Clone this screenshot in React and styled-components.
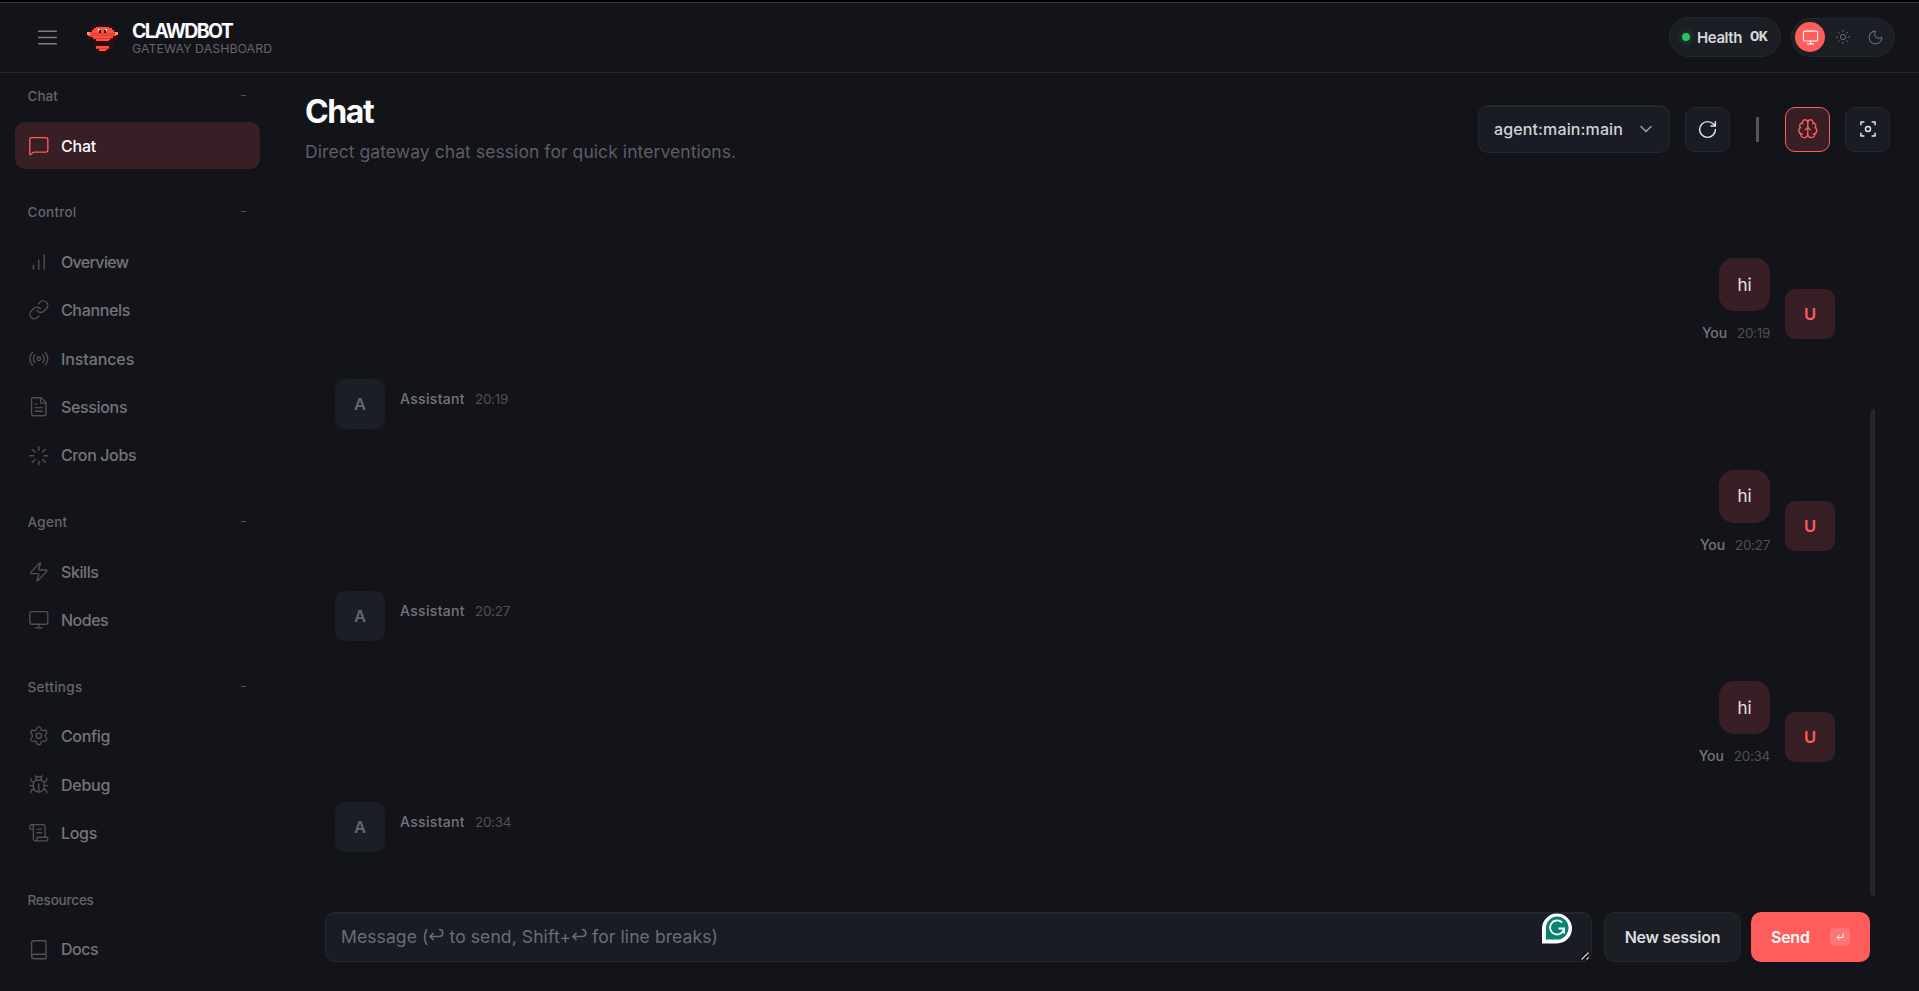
import React from "react";
import styled, { createGlobalStyle } from "styled-components";
import {
  MessageSquare, Link, Radio, FileText, Loader, Zap, Monitor, Settings, Bug,
  ScrollText, Book, Sun, Moon, RotateCw, Brain, ChevronDown,
} from "lucide-react";

const Global = createGlobalStyle`
  * { box-sizing: border-box; }
  body { margin: 0; background: #12141a; overflow: hidden; }
  button { font: inherit; cursor: pointer; }
`;

const Shell = styled.div`
  width: 100vw;
  height: 100vh;
  display: grid;
  grid-template: 73px minmax(0, 1fr) / 275px minmax(0, 1fr);
  background: #12141a;
  color: #e4e4e7;
  font-family: Inter, "Noto Sans", sans-serif;
`;

const Topbar = styled.header`
  grid-column: 1 / -1;
  display: flex;
  align-items: center;
  justify-content: space-between;
  padding: 0 24px 0 35px;
  border-top: 2px solid #000;
  border-bottom: 1px solid #27272a;
  box-shadow: inset 0 1px #3a3a3d;
`;

const Brand = styled.div`
  display: flex;
  align-items: center;
  svg { display: block; }
`;

const LogoSlot = styled.div`
  margin: 4px 0 0 22px;
`;

const BrandText = styled.div`
  display: flex;
  flex-direction: column;
  margin: 3px 0 0 8px;
  white-space: nowrap;
`;

const BrandName = styled.div`
  font-size: 19.5px;
  font-weight: 700;
  line-height: 20px;
  letter-spacing: -1.65px;
  color: #fafafa;
`;

const BrandSub = styled.div`
  font-size: 12.3px;
  line-height: 15px;
  letter-spacing: 0.08px;
  color: #65656d;
`;

const TopActions = styled.div`
  display: flex;
  align-items: center;
  gap: 10px;
`;

const Pill = styled.div`
  display: flex;
  align-items: center;
  width: 112px;
  height: 40px;
  padding-left: 12px;
  border: 1px solid #27272a;
  border-radius: 20px;
  background: #1b1e25;
  font-size: 15px;
  font-weight: 600;
  letter-spacing: -0.41px;
  white-space: nowrap;
  color: #d6d6d9;
`;

const Dot = styled.span`
  width: 8px;
  height: 8px;
  margin-right: 7px;
  border-radius: 50%;
  background: #22c55e;
  box-shadow: 0 0 8px rgba(34, 197, 94, 0.4);
`;

const PillValue = styled.span`
  margin-left: 8px;
  font: 700 15.5px "Liberation Mono", monospace;
  letter-spacing: -0.7px;
`;

const ThemeToggle = styled.div`
  display: flex;
  align-items: center;
  width: 104px;
  height: 39px;
  padding: 0 3px;
  gap: 2.5px;
  border: 1px solid #27272a;
  border-radius: 20px;
  background: #1b1e25;
`;

const ThemeOption = styled.span`
  display: grid;
  place-items: center;
  width: 30px;
  height: 30px;
  border-radius: 50%;
  color: ${(p) => (p.$on ? "#fff" : "#6a6a72")};
  background: ${(p) => (p.$on ? "#ff5c5c" : "transparent")};
`;

const Nav = styled.nav`
  padding: 8px 15px 0;
`;

const Section = styled.section`
  margin-bottom: 28.2px;
`;

const SectionLabel = styled.div`
  display: flex;
  justify-content: space-between;
  height: 30px;
  margin-bottom: 11px;
  padding: 0 13px 0 12.5px;
  line-height: 30px;
  font-size: 13.5px;
  font-weight: 500;
  letter-spacing: ${(p) => p.$track}px;
  color: #65656d;
`;

const Dash = styled.span`
  font-size: 10px;
  line-height: 27px;
  letter-spacing: 0;
  color: #55555c;
`;

const NavItem = styled.a`
  display: flex;
  align-items: center;
  gap: 11.2px;
  height: 47px;
  margin-bottom: 1.45px;
  padding-left: 13.2px;
  border-radius: 10px;
  font-size: 16px;
  font-weight: 500;
  letter-spacing: ${(p) => p.$track}px;
  color: ${(p) => (p.$active ? "#fafafa" : "#74747c")};
  background: ${(p) => (p.$active ? "#371f25" : "transparent")};
  svg { color: ${(p) => (p.$active ? "#ff5c5c" : "#505056")}; }
`;

const Main = styled.main`
  display: flex;
  flex-direction: column;
  padding: 19px 29px 28px 30px;
`;

const PageHeader = styled.div`
  display: flex;
  justify-content: space-between;
  height: 92px;
`;

const Title = styled.h1`
  margin: 0;
  font-size: 32px;
  line-height: 40px;
  font-weight: 700;
  letter-spacing: -1.4px;
  color: #fafafa;
`;

const Subtitle = styled.p`
  margin: 9px 0 0;
  font-size: 17.5px;
  line-height: 22px;
  letter-spacing: 0.07px;
  color: #5d5d65;
`;

const Controls = styled.div`
  display: flex;
  align-items: center;
  height: 48px;
  margin-top: 13px;
`;

const SelectBox = styled.div`
  display: flex;
  align-items: center;
  justify-content: space-between;
  width: 192px;
  height: 48px;
  margin-right: 15px;
  padding: 0 13px 2px 15px;
  border: 1px solid #27272a;
  border-top-width: 2px;
  border-radius: 10px;
  background: #191c24;
  font-size: 16px;
  font-weight: 500;
  letter-spacing: 0.13px;
  color: #d2d2d6;
`;

const IconButton = styled.button`
  display: grid;
  place-items: center;
  width: 45px;
  height: 45px;
  padding: 0;
  border: 1px solid ${(p) => (p.$on ? "#ff5c5c" : "#27272a")};
  border-radius: 10px;
  background: ${(p) => (p.$on ? "#371f25" : "#191c24")};
  color: ${(p) => (p.$on ? "#ff5c5c" : "#e4e4e7")};
  & + & { margin-left: 15px; }
`;

const Separator = styled.span`
  width: 3px;
  height: 25px;
  margin: 0 26px;
  background: #55555b;
`;

const Thread = styled.div`
  position: relative;
  flex: 1;
  min-height: 0;
  padding: 74px 55px 0 30px;
`;

const ScrollThumb = styled.span`
  position: absolute;
  top: 225px;
  right: 15px;
  width: 5px;
  height: 488px;
  border-radius: 5px 0 0 5px;
  background: #27272a;
`;

const Exchange = styled.div`
  height: 211.6px;
`;

const UserGroup = styled.div`
  display: flex;
  justify-content: flex-end;
  gap: 15px;
  height: 85px;
`;

const AssistantGroup = styled.div`
  display: flex;
  gap: 15px;
  margin-top: 36px;
`;

const Stack = styled.div`
  display: flex;
  flex-direction: column;
  align-items: flex-end;
`;

const Bubble = styled.div`
  display: grid;
  place-items: center;
  width: 51px;
  height: 53px;
  border-radius: 15px;
  background: #371f25;
  font-size: 17px;
  color: #e4e4e7;
`;

const Avatar = styled.div`
  display: grid;
  place-items: center;
  width: 50px;
  height: 50px;
  margin-top: ${(p) => (p.$user ? 31 : 0)}px;
  border-radius: 10px;
  background: ${(p) => (p.$user ? "#371f25" : "#1b1e25")};
  color: ${(p) => (p.$user ? "#ff5c5c" : "#65656d")};
  font-size: 16.5px;
  font-weight: 600;
`;

const Meta = styled.div`
  display: flex;
  gap: 10px;
  margin-top: ${(p) => (p.$assistant ? 10 : 12)}px;
  font-size: 14px;
  line-height: 20px;
  font-weight: 500;
  letter-spacing: ${(p) => (p.$assistant ? 0.33 : -0.1)}px;
  color: #74747c;
  white-space: nowrap;
`;

const Time = styled.span`
  font-weight: 400;
  font-size: 13.5px;
  letter-spacing: -0.3px;
  color: #505056;
`;

const Composer = styled.div`
  display: flex;
  height: 51px;
  padding: 0 20px;
`;

const Field = styled.div`
  position: relative;
  flex: 1;
  height: 50px;
  margin-right: 12px;
  padding: 0 15px;
  border: 1px solid #27272a;
  border-top-width: 2px;
  border-radius: 10px;
  background: #191c24;
  font-size: 17.5px;
  line-height: 46px;
  letter-spacing: 0.1px;
  color: #6d6d70;
`;

const Helper = styled.svg`
  position: absolute;
  right: 19px;
  top: -1px;
`;

const Grip = styled.svg`
  position: absolute;
  right: 1px;
  bottom: 0;
`;

const ActionButton = styled.button`
  display: flex;
  align-items: center;
  justify-content: ${(p) => (p.$primary ? "space-between" : "center")};
  width: ${(p) => (p.$primary ? 119 : 137)}px;
  height: 50px;
  margin-left: ${(p) => (p.$primary ? 10 : 0)}px;
  padding: 0 20px;
  border: ${(p) => (p.$primary ? 0 : "1px solid #27272a")};
  border-radius: 10px;
  background: ${(p) => (p.$primary ? "#ff5c5c" : "#1b1e25")};
  color: ${(p) => (p.$primary ? "#fff" : "#dcdcdf")};
  font-size: 16px;
  font-weight: 600;
  letter-spacing: -0.25px;
  white-space: nowrap;
`;

const Key = styled.kbd`
  display: grid;
  place-items: center;
  width: 20px;
  height: 18px;
  border-radius: 4px;
  background: rgba(255, 255, 255, 0.16);
`;

const MenuIcon = () => (
  <svg width="25" height="25" viewBox="0 0 24 24" fill="none" stroke="#7c7c84" strokeWidth="1.4" strokeLinecap="round">
    <path d="M3.5 6h17M3.5 12h17M3.5 18h17" />
  </svg>
);

const Bars = ({ size, strokeWidth }) => (
  <svg width={size} height={size} viewBox="0 0 24 24" fill="none" stroke="currentColor" strokeWidth={strokeWidth} strokeLinecap="round">
    <path d="M12 20V10M18 20V4M6 20v-4" />
  </svg>
);

const FocusIcon = () => (
  <svg width="20" height="20" viewBox="0 0 24 24" fill="none" stroke="currentColor" strokeWidth="1.8" strokeLinecap="round" strokeLinejoin="round">
    <path d="M3.5 7V3.5H7M17 3.5h3.5V7M20.5 17v3.5H17M7 20.5H3.5V17" />
    <circle cx="12" cy="12" r="3" />
  </svg>
);

const ReturnArrow = ({ size = 16 }) => (
  <svg width={size} height={size} viewBox="0 0 16 16" fill="none" stroke="currentColor" strokeWidth="1.6">
    <path d="M11 2.5c5 0 5 7 0 7H2M5.5 6 2 9.5 5.5 13" />
  </svg>
);

const EnterArrow = () => (
  <svg width="8" height="8" viewBox="0 0 8 8" fill="none" stroke="currentColor" strokeWidth="1">
    <path d="M7 0.5V4.5H1.2M3.4 2.3 1.2 4.5 3.4 6.7" />
  </svg>
);

const Logo = () => (
  <svg width="42" height="38" viewBox="0 0 42 38" shapeRendering="crispEdges">
    <path fill="#2c0e13" d="M12 5h18v2h3v5h3v8h-4v4H11v-4H6v-8h3V7h3zM12 24h19v7h-5v3h-9v-3h-5z" />
    <path fill="#ff4f40" d="M14 7h13v1h3v2h2v2h3v1h1v2h-2v1h-3v2h-3v2h-1v1H14v-2h-3v-2H8v-1H6v-1H5v-2h3v-1h2v-2h2V8h2zM14 26h13v2h-2v2h-1v1h-7v-2h-3z" />
    <path stroke="#d93a34" d="M9 13.5h24M8 15.5h25M12 18.5h17M14 28.5h13" />
    <path fill="#ff8a70" d="M5 12h3v3H5zM33 12h3v3h-3z" />
    <path fill="#fff" d="M16 9h2v2h-2zM23 9h2v2h-2z" />
    <path fill="#1c1012" d="M17 10h2v3h-2zM22 10h2v3h-2z" />
  </svg>
);

const AssistBadge = () => (
  <Helper width="30" height="31" viewBox="0 0 30 31">
    <path fill="#fff" d="M15 0.5a15 15 0 0 1 0 30H0V15.500A15 15 0 0 1 15 0.500z" />
    <path fill="#0b8172" d="M15 3.500a11.500 11.500 0 0 1 0 23H4V15A11.500 11.500 0 0 1 15 3.500z" />
    <path fill="none" stroke="#fff" strokeWidth="1.8" d="M20 9.500A7 7 0 1 0 22 15.500H16.500M22 15.500V20.500" />
  </Helper>
);

const ResizeGrip = () => (
  <Grip width="10" height="10" viewBox="0 0 10 10">
    <path d="M1 8.500 8 1.500M6 8.500 8 6.500" stroke="#000" strokeWidth="3.500" />
    <path d="M1.500 8.500 8.500 1.500M6.500 8.500 8.500 6.500" stroke="#d8d8d8" strokeWidth="1.400" />
  </Grip>
);

const GROUPS = [
  ["Chat", 0, [["Chat", MessageSquare, -0.22, true]]],
  ["Control", 0.24, [
    ["Overview", Bars, -0.65], ["Channels", Link, -0.34], ["Instances", Radio, -0.1],
    ["Sessions", FileText, -0.34], ["Cron Jobs", Loader, -0.37],
  ]],
  ["Agent", 0.3, [["Skills", Zap, -0.4], ["Nodes", Monitor, -0.5]]],
  ["Settings", 0.3, [["Config", Settings, -0.33], ["Debug", Bug, -0.26], ["Logs", ScrollText, -0.28]]],
  ["Resources", -0.2, [["Docs", Book, -0.48]]],
];

const TIMES = ["20:19", "20:27", "20:34"];

export default function App() {
  return (
    <>
      <Global />
      <Shell>
        <Topbar>
          <Brand>
            <MenuIcon />
            <LogoSlot><Logo /></LogoSlot>
            <BrandText>
              <BrandName>CLAWDBOT</BrandName>
              <BrandSub>GATEWAY DASHBOARD</BrandSub>
            </BrandText>
          </Brand>
          <TopActions>
            <Pill><Dot />Health<PillValue>OK</PillValue></Pill>
            <ThemeToggle>
              <ThemeOption $on><Monitor size={17} strokeWidth={1.5} /></ThemeOption>
              <ThemeOption><Sun size={16} strokeWidth={1.5} /></ThemeOption>
              <ThemeOption><Moon size={17} strokeWidth={1.5} /></ThemeOption>
            </ThemeToggle>
          </TopActions>
        </Topbar>
        <Nav>
          {GROUPS.map(([label, track, items]) => (
            <Section key={label}>
              <SectionLabel $track={track}>
                {label}
                {label !== "Resources" && <Dash>−</Dash>}
              </SectionLabel>
              {items.map(([name, Icon, itemTrack, active]) => (
                <NavItem key={name} $active={active} $track={itemTrack}>
                  <Icon size={21.6} strokeWidth={1.5} />
                  {name}
                </NavItem>
              ))}
            </Section>
          ))}
        </Nav>
        <Main>
          <PageHeader>
            <div>
              <Title>Chat</Title>
              <Subtitle>Direct gateway chat session for quick interventions.</Subtitle>
            </div>
            <Controls>
              <SelectBox>agent:main:main<ChevronDown size={20} strokeWidth={1.7} color="#a0a0a6" /></SelectBox>
              <IconButton><RotateCw size={21} strokeWidth={1.7} /></IconButton>
              <Separator />
              <IconButton $on><Brain size={21.5} strokeWidth={1.5} /></IconButton>
              <IconButton><FocusIcon /></IconButton>
            </Controls>
          </PageHeader>
          <Thread>
            {TIMES.map((time) => (
              <Exchange key={time}>
                <UserGroup>
                  <Stack>
                    <Bubble>hi</Bubble>
                    <Meta>You<Time>{time}</Time></Meta>
                  </Stack>
                  <Avatar $user>U</Avatar>
                </UserGroup>
                <AssistantGroup>
                  <Avatar>A</Avatar>
                  <Meta $assistant>Assistant<Time>{time}</Time></Meta>
                </AssistantGroup>
              </Exchange>
            ))}
            <ScrollThumb />
          </Thread>
          <Composer>
            <Field>
              Message (<ReturnArrow /> to send, Shift+<ReturnArrow /> for line breaks)
              <AssistBadge />
              <ResizeGrip />
            </Field>
            <ActionButton>New session</ActionButton>
            <ActionButton $primary>Send<Key><EnterArrow /></Key></ActionButton>
          </Composer>
        </Main>
      </Shell>
    </>
  );
}
